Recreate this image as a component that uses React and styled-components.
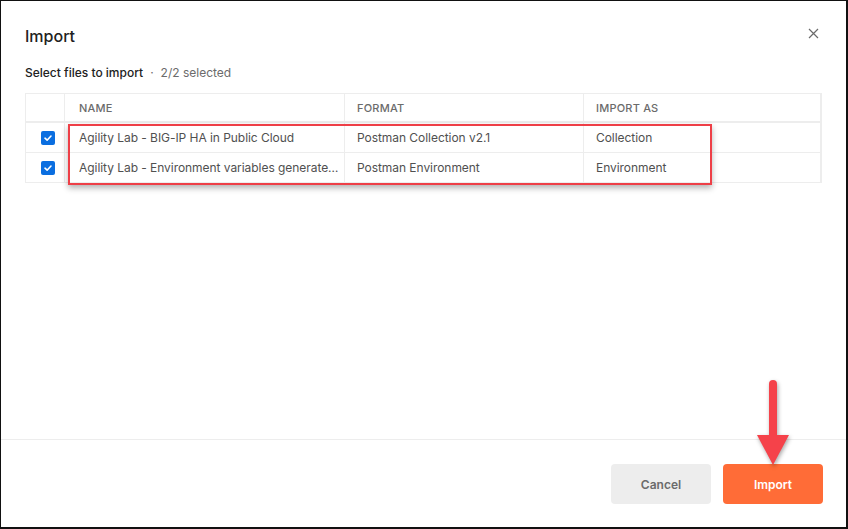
import React from "react";
import styled, { createGlobalStyle } from "styled-components";

const GlobalStyle = createGlobalStyle`
  html, body { margin: 0; padding: 0; background: #fff; }
  body { font-family: Inter, "Noto Sans", "Liberation Sans", sans-serif; }
  * { box-sizing: border-box; }
`;

const Frame = styled.div`
  position: relative;
  width: 848px;
  height: 529px;
  border: 1px solid #111;
  border-right-width: 2px;
  border-bottom-width: 2px;
  background: #fff;
  display: flex;
  flex-direction: column;
  overflow: hidden;
`;

const Header = styled.div`
  padding: 23px 24px 0 24px;
  display: flex;
  align-items: flex-start;
  justify-content: space-between;
`;

const Title = styled.h1`
  margin: 0;
  font-size: 16px;
  line-height: 24px;
  font-weight: 500;
  color: #212121;
`;

const CloseButton = styled.button`
  border: 0;
  background: none;
  padding: 0;
  margin: 1px 1px 0 0;
  width: 16px;
  height: 16px;
  display: flex;
  align-items: center;
  justify-content: center;
  color: #6b6b6b;
`;

const Body = styled.div`
  flex: 1;
  padding: 17px 24px 0 24px;
`;

const Subtitle = styled.div`
  font-size: 12px;
  line-height: 16px;
  color: #212121;
  font-weight: 500;
  margin-bottom: 12px;
`;

const Muted = styled.span`
  color: #6b6b6b;
  font-weight: 400;
  margin-left: 7px;
`;

const Dot = styled.span`
  margin-right: 7px;
`;

const Table = styled.div`
  border: 1px solid #ededed;
  border-bottom: 0;
  font-size: 12px;
`;

const Row = styled.div`
  display: grid;
  grid-template-columns: 39px 280px 239px 237px minmax(0, 1fr);
  height: ${(p) => (p.$head ? "29px" : "30px")};
`;

const Cell = styled.div`
  border-right: 1px solid #ededed;
  border-bottom: ${(p) => (p.$head ? "2px" : "1px")} solid #ededed;
  padding: ${(p) => (p.$empty ? "0" : p.$name ? "0 4px 0 14px" : "0 12px")};
  display: flex;
  align-items: center;
  white-space: nowrap;
  overflow: hidden;
  min-width: 0;
  color: ${(p) => (p.$head ? "#6b6b6b" : "#505050")};
  font-size: ${(p) => (p.$head ? "11px" : "12px")};
  font-weight: ${(p) => (p.$head ? 500 : 400)};
  letter-spacing: ${(p) => (p.$head ? "0.2px" : "-0.05px")};
  justify-content: ${(p) => (p.$center ? "center" : "flex-start")};
  &:last-child { border-right: 0; }
`;

const Ellipsis = styled.span`
  overflow: hidden;
  text-overflow: ellipsis;
  white-space: nowrap;
  display: block;
`;

const Check = styled.span`
  width: 14px;
  height: 14px;
  border-radius: 2px;
  background: #0a6ee0;
  display: inline-flex;
  align-items: center;
  justify-content: center;
  margin-left: 5px;
`;

const Footer = styled.div`
  border-top: 1px solid #ededed;
  padding: 24px 23px 23px 24px;
  display: flex;
  justify-content: flex-end;
  gap: 12px;
`;

const Button = styled.button`
  width: 100px;
  height: 40px;
  border: 0;
  border-radius: 4px;
  font-family: inherit;
  font-size: 12px;
  font-weight: 600;
  background: ${(p) => (p.$primary ? "#ff6c37" : "#ededed")};
  color: ${(p) => (p.$primary ? "#fff" : "#6b6b6b")};
`;

const Highlight = styled.div`
  position: absolute;
  left: 67px;
  top: 123px;
  width: 644px;
  height: 61px;
  border: 2px solid #ee3f47;
  box-shadow: 0 3px 6px rgba(0, 0, 0, 0.3);
  pointer-events: none;
`;

const Arrow = styled.svg`
  position: absolute;
  left: 751px;
  top: 375px;
  overflow: visible;
  filter: drop-shadow(1px 2px 2px rgba(0, 0, 0, 0.35));
  pointer-events: none;
`;

const CheckIcon = () => (
  <svg width="10" height="10" viewBox="0 0 10 10">
    <path d="M2 5.2 L4.1 7.2 L8 3" fill="none" stroke="#fff" strokeWidth="1.6" strokeLinecap="round" strokeLinejoin="round" />
  </svg>
);

const rows = [
  { name: "Agility Lab - BIG-IP HA in Public Cloud", format: "Postman Collection v2.1", as: "Collection" },
  { name: "Agility Lab - Environment variables generated by Terraform", format: "Postman Environment", as: "Environment" },
];

export default function App() {
  return (
    <>
      <GlobalStyle />
      <Frame>
        <Header>
          <Title>Import</Title>
          <CloseButton aria-label="Close">
            <svg width="11" height="11" viewBox="0 0 11 11">
              <path d="M1 1 L10 10 M10 1 L1 10" stroke="#6b6b6b" strokeWidth="1.2" />
            </svg>
          </CloseButton>
        </Header>
        <Body>
          <Subtitle>
            Select files to import
            <Muted>
              <Dot>·</Dot>2/2 selected
            </Muted>
          </Subtitle>
          <Table>
            <Row $head>
              <Cell $head $empty />
              <Cell $head $name>NAME</Cell>
              <Cell $head>FORMAT</Cell>
              <Cell $head>IMPORT AS</Cell>
              <Cell $head $empty />
            </Row>
            {rows.map((r) => (
              <Row key={r.name}>
                <Cell $center $empty>
                  <Check>
                    <CheckIcon />
                  </Check>
                </Cell>
                <Cell $name>
                  <Ellipsis>{r.name}</Ellipsis>
                </Cell>
                <Cell>{r.format}</Cell>
                <Cell>{r.as}</Cell>
                <Cell $empty />
              </Row>
            ))}
          </Table>
        </Body>
        <Footer>
          <Button>Cancel</Button>
          <Button $primary>Import</Button>
        </Footer>
        <Highlight />
        <Arrow width="42" height="96" viewBox="0 0 42 96">
          <line x1="21" y1="8" x2="21" y2="64" stroke="#f5424a" strokeWidth="8" strokeLinecap="round" />
          <polygon points="5,59 37,59 21,89" fill="#f5424a" />
        </Arrow>
      </Frame>
    </>
  );
}
